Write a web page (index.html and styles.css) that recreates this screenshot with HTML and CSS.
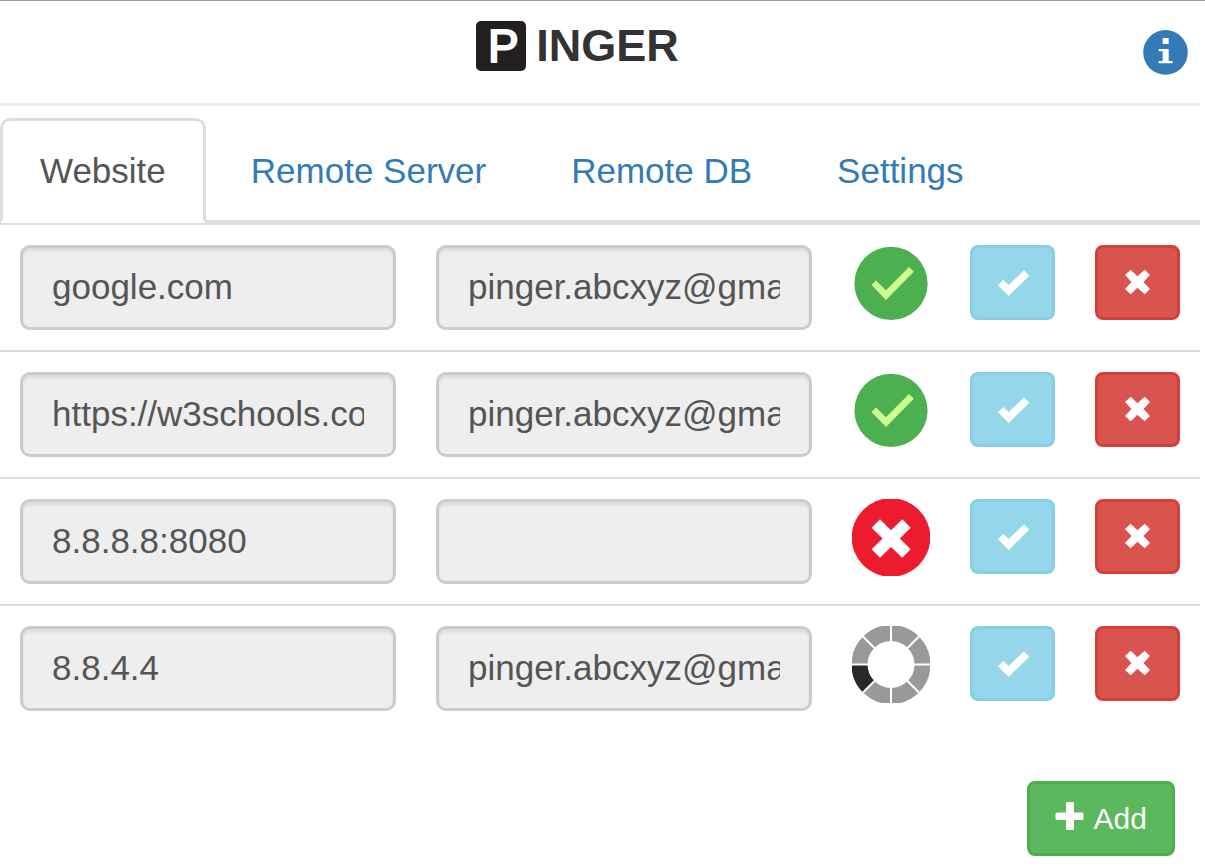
FILE: index.html
```html
<!DOCTYPE html>
<html lang="en">
<head>
<meta charset="utf-8">
<title>Pinger</title>
<link rel="stylesheet" href="styles.css">
</head>
<body>
<svg class="sprite" aria-hidden="true">
  <symbol id="check" viewBox="0 0 35 35"><path fill="#fff" d="M3 20.3 8.3 15l5.4 5L29 5.3l5.3 5.4L13.7 31z"/></symbol>
  <symbol id="cross" viewBox="0 0 35 35"><path fill="#fff" d="M5 10l5.7-5.3 6.7 6.5 7.3-6.5L30 10l-6.5 7 6.5 7-5.3 5.3-7.3-6.6-6.7 6.6L5 24l6.5-7z"/></symbol>
  <symbol id="status-up" viewBox="0 0 78 77"><circle cx="39" cy="38.4" r="36.6" fill="#4caf50"/><path fill="#ccff90" d="M19.5 39.9 24 35.5l10 9.8L57 22l4.8 4.8L34 55z"/></symbol>
  <symbol id="status-down" viewBox="0 0 78 77"><circle cx="39" cy="38.5" r="39.3" fill="#ed1b2e"/><path fill="#fff" d="M19.6 28.7 28 20.3l11 10.9 11.3-10.9 8.4 8.4-10.9 10.7 10.9 10.9-8.4 8.4L39 47.9 28 58.7l-8.4-8.4 11-10.9z"/></symbol>
  <symbol id="status-wait" viewBox="0 0 78 77">
    <circle cx="39" cy="38.5" r="31.5" fill="none" stroke="#999" stroke-width="16"/>
    <path d="M7.5 38.5A31.5 31.5 0 0 0 16.7 60.8" fill="none" stroke="#282828" stroke-width="16"/>
    <path d="M39 0v77M0 38.5h78M11 10.5l56 56M67 10.5l-56 56" stroke="#fff" stroke-width="2"/>
  </symbol>
</svg>

<header class="header">
  <h1 class="brand"><span class="brand-mark">P</span>INGER</h1>
  <a class="info" href="#about" aria-label="About">
    <svg viewBox="0 0 45 45" width="45" height="45"><circle cx="22.5" cy="22.4" r="22.3" fill="#337ab7"/><path fill="#fff" d="M19.7 8h6v6h-6zM15.7 19h10v12h4v2.2h-14V31h4V21.200h-4z"/></svg>
  </a>
</header>

<nav class="tabs">
  <a class="tab active" href="#website" aria-current="page">Website</a>
  <a class="tab" href="#server">Remote Server</a>
  <a class="tab" href="#db">Remote DB</a>
  <a class="tab" href="#settings">Settings</a>
</nav>

<main class="content">
  <table class="sites">
    <colgroup><col><col><col class="col-status"><col class="col-action"><col class="col-action"></colgroup>
    <tbody>
      <tr>
        <td><input class="field" type="text" aria-label="Address 1" value="google.com" disabled></td>
        <td><input class="field" type="text" aria-label="Email 1" value="pinger.abcxyz@gmail.com" disabled></td>
        <td><svg class="status" role="img" aria-label="Up"><use href="#status-up"/></svg></td>
        <td><button class="btn btn-save" type="button" aria-label="Save" disabled><svg class="glyph"><use href="#check"/></svg></button></td>
        <td><button class="btn btn-delete" type="button" aria-label="Delete"><svg class="glyph"><use href="#cross"/></svg></button></td>
      </tr>
      <tr>
        <td><input class="field" type="text" aria-label="Address 2" value="https://w3schools.com" disabled></td>
        <td><input class="field" type="text" aria-label="Email 2" value="pinger.abcxyz@gmail.com" disabled></td>
        <td><svg class="status" role="img" aria-label="Up"><use href="#status-up"/></svg></td>
        <td><button class="btn btn-save" type="button" aria-label="Save" disabled><svg class="glyph"><use href="#check"/></svg></button></td>
        <td><button class="btn btn-delete" type="button" aria-label="Delete"><svg class="glyph"><use href="#cross"/></svg></button></td>
      </tr>
      <tr>
        <td><input class="field" type="text" aria-label="Address 3" value="8.8.8.8:8080" disabled></td>
        <td><input class="field" type="text" aria-label="Email 3" value="" disabled></td>
        <td><svg class="status" role="img" aria-label="Down"><use href="#status-down"/></svg></td>
        <td><button class="btn btn-save" type="button" aria-label="Save" disabled><svg class="glyph"><use href="#check"/></svg></button></td>
        <td><button class="btn btn-delete" type="button" aria-label="Delete"><svg class="glyph"><use href="#cross"/></svg></button></td>
      </tr>
      <tr>
        <td><input class="field" type="text" aria-label="Address 4" value="8.8.4.4" disabled></td>
        <td><input class="field" type="text" aria-label="Email 4" value="pinger.abcxyz@gmail.com" disabled></td>
        <td><svg class="status" role="img" aria-label="Checking"><use href="#status-wait"/></svg></td>
        <td><button class="btn btn-save" type="button" aria-label="Save" disabled><svg class="glyph"><use href="#check"/></svg></button></td>
        <td><button class="btn btn-delete" type="button" aria-label="Delete"><svg class="glyph"><use href="#cross"/></svg></button></td>
      </tr>
    </tbody>
  </table>
  <div class="actions">
    <button class="btn btn-add" type="button"><svg class="plus" viewBox="0 0 30 30"><path fill="#fff" d="M12.500 0h5q1.500 0 1.500 1.500v9h8q1.500 0 1.500 1.500V16.500q0 1.500-1.500 1.500h-8v8.500q0 1.500-1.500 1.500H12.500q-1.500 0-1.500-1.500V18H2.500q-2 0-2-1.500v-4.500q0-1.500 2-1.500H11v-9Q11 0 12.500 0z"/></svg>Add</button>
  </div>
</main>
</body>
</html>
```
FILE: styles.css
```css
* {
  box-sizing: border-box;
}

body {
  margin: 0;
  border-top: 1px solid #999;
  background: #fff;
  color: #333;
  font-family: "Liberation Sans", Arial, sans-serif;
  font-size: 35px;
  line-height: 50px;
}

.sprite {
  position: absolute;
  width: 0;
  height: 0;
}

.header,
.tabs,
.content {
  margin-right: 5px;
}

.header {
  display: flex;
  align-items: flex-start;
  padding: 20px 12px 28px;
  border-bottom: 3px solid #eee;
}

.brand {
  display: flex;
  flex: 1;
  justify-content: center;
  gap: 10px;
  margin: 0;
  font-size: 45px;
  font-weight: 700;
  line-height: 50px;
}

.brand-mark {
  width: 50px;
  height: 50px;
  padding-left: 4px;
  border-radius: 5px;
  background: #231f20;
  color: #fff;
  font-size: 46px;
  font-weight: 400;
  text-align: center;
  -webkit-text-stroke: 2px #fff;
}

.info {
  display: flex;
  margin-top: 9px;
}

.tabs {
  display: flex;
  gap: 5px;
  margin-top: 12px;
  border-bottom: 3px solid #ddd;
}

.tab {
  margin-bottom: -3px;
  padding: 25px 37px;
  border: 3px solid transparent;
  border-radius: 10px 10px 0 0;
  color: #337ab7;
  line-height: 49px;
  text-decoration: none;
}

.tab.active {
  border-color: #ddd #ddd #fff;
  background: #fff;
  color: #555;
}

.sites {
  width: 100%;
  border-spacing: 0;
  table-layout: fixed;
}

.sites td {
  padding: 20px;
  border-top: 2px solid #ddd;
  vertical-align: top;
}

.col-status {
  width: 118px;
}

.col-action {
  width: 125px;
}

.field {
  display: block;
  width: 100%;
  height: 85px;
  padding: 14px 29px 16px;
  border: 3px solid #ccc;
  border-radius: 10px;
  background: #eee;
  box-shadow: inset 0 3px 3px rgba(0, 0, 0, 0.08);
  color: #555;
  font: inherit;
}

.status {
  display: block;
  width: 78px;
  height: 77px;
}

.btn {
  display: flex;
  align-items: center;
  justify-content: center;
  height: 75px;
  padding: 0 25px;
  border: 3px solid;
  border-radius: 8px;
  color: #fff;
  font: inherit;
  font-size: 30px;
}

.btn-save,
.btn-delete {
  width: 100%;
  padding: 0;
}

.btn-save {
  border-color: #85d0e7;
  background: #96d6ea;
}

.btn-delete {
  border-color: #d43f3a;
  background: #d9534f;
}

.btn-add {
  gap: 9px;
  border-color: #4cae4c;
  background: #5cb85c;
}

.glyph {
  width: 35px;
  height: 35px;
}

.plus {
  width: 30px;
  height: 30px;
  margin-bottom: 4px;
}

.actions {
  display: flex;
  justify-content: flex-end;
  padding: 50px 25px 12px;
}
```
